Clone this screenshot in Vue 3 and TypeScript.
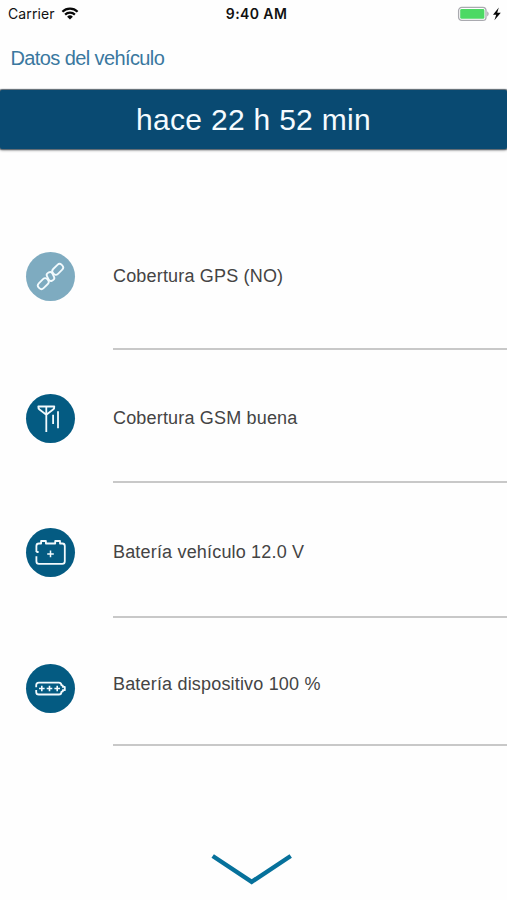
<script setup lang="ts">
interface Reading {
  id: 'gps' | 'gsm' | 'vehicle' | 'device'
  label: string
}

const elapsed = 'hace 22 h 52 min'

const readings: Reading[] = [
  { id: 'gps', label: 'Cobertura GPS (NO)' },
  { id: 'gsm', label: 'Cobertura GSM buena' },
  { id: 'vehicle', label: 'Batería vehículo 12.0 V' },
  { id: 'device', label: 'Batería dispositivo 100 %' },
]
</script>

<template>
  <main class="screen">
    <header class="status">
      <div class="carrier">
        <span>Carrier</span>
        <svg class="wifi" viewBox="0 0 18 13" width="18" height="13">
          <path d="M1.4 4.7a10.8 10.8 0 0 1 15.2 0M4.1 7.6a7 7 0 0 1 9.8 0" fill="none" stroke="#080808" stroke-width="2.2" />
          <path d="M9 12.6 6.1 9.7a4.2 4.2 0 0 1 5.8 0z" fill="#080808" />
        </svg>
      </div>
      <span class="clock">9:40 AM</span>
      <div class="power">
        <svg viewBox="0 0 46 16" width="46" height="16">
          <rect x="1.6" y="1.4" width="27.4" height="13" rx="3.2" fill="#fff" stroke="#aaaab0" stroke-width="1.3" />
          <rect x="3.2" y="3" width="24.2" height="9.8" rx="1.4" fill="#4cd964" />
          <path d="M30.2 5.3q3 2.6 0 5.2z" fill="#aaaab0" />
          <path d="M41.8 1.6 36 8.8h3.2l-1.8 5.4 6.4-7.4h-3.6z" fill="#080808" />
        </svg>
      </div>
    </header>

    <h1 class="title"><span>Datos del vehículo</span></h1>
    <div class="banner"><span>{{ elapsed }}</span></div>

    <ul class="readings">
      <li v-for="item in readings" :key="item.id" class="row" :class="item.id">
        <span class="badge">
          <svg viewBox="0.5 0.5 49 49" width="49" height="49" fill="none" stroke="#f2fafd" stroke-width="1.8" stroke-linejoin="round">
            <g v-if="item.id === 'gps'" transform="rotate(-45 25 25)">
              <rect x="8.8" y="21.6" width="12" height="6.8" rx="3" />
              <rect x="29.2" y="21.6" width="12" height="6.8" rx="3" />
              <rect x="22" y="20.6" width="6" height="8.8" rx="2.6" transform="rotate(18 25 25)" />
              <path d="M20.8 25H22M28 25h1.2" />
            </g>
            <g v-else-if="item.id === 'gsm'">
              <path d="M20.8 38.6V13M12.8 13h16q.2 1.8-1.2 3l-6.8 5.2-6.8-5.2q-1.4-1.2-1.2-3z" />
              <path d="M27.6 21.3v9.2M32.5 17.8v17" />
            </g>
            <g v-else-if="item.id === 'vehicle'">
              <path d="M10.9 24.5v-6q0-2.5 2.5-2.5h2.2v-2.5h4.8V16h9.3v-2.5h4.8V16h2.3q2.5 0 2.5 2.5v15.3q0 2.6-2.5 2.6H13.4q-2.5 0-2.5-2.6v-5M10.9 24.5h2.2" />
              <path d="M25 23.1v6.6M21.7 26.4h6.6" stroke-width="1.5" />
            </g>
            <g v-else>
              <path d="M10.7 23.8v-2.1q0-2.6 2.6-2.6h20q2.6 0 2.6 2.6l1.4.5v1.2h2v3.3h-2v1.2l-1.4.5q0 2.6-2.6 2.6h-20q-2.6 0-2.6-2.6v-2" />
              <path d="M16.3 22.2v5.6M13.5 25h5.6M24 22.2v5.6M21.2 25h5.6M31.7 22.2v5.6M28.9 25h5.6" stroke-width="1.6" />
            </g>
          </svg>
        </span>
        <span class="label"><span>{{ item.label }}</span></span>
      </li>
    </ul>

    <footer class="more">
      <svg viewBox="0 0 82 34" width="82" height="34">
        <path d="M1.7 3 40.7 28.8 79.7 3" fill="none" stroke="#06719b" stroke-width="4.4" />
      </svg>
    </footer>
  </main>
</template>

<style>
body {
  margin: 0;
  background: #fefefe;
}
</style>

<style scoped>
.screen {
  box-sizing: border-box;
  display: flex;
  flex-direction: column;
  width: 100%;
  height: 900px;
  overflow: hidden;
  background: #fefefe;
  font-family: "Liberation Sans", Arial, sans-serif;
}

.status {
  display: grid;
  grid-template-columns: 1fr auto 1fr;
  align-items: center;
  height: 27px;
  padding: 0 4px 0 8px;
  font-family: Inter, sans-serif;
  font-size: 14px;
  line-height: 27px;
  color: #111;
}

.carrier {
  display: flex;
  align-items: center;
  gap: 6px;
  letter-spacing: 0.1px;
}

.clock {
  padding-left: 2px;
  font-weight: 600;
  letter-spacing: 0.4px;
}

.power {
  display: flex;
  justify-content: flex-end;
}

.title {
  height: 63px;
  margin: 0;
  padding-left: 10.5px;
  box-sizing: border-box;
  font-size: 20px;
  font-weight: 300;
  line-height: 63px;
  letter-spacing: -0.6px;
  color: #3a789f;
}

.banner {
  flex: none;
  height: 59px;
  background: #094a72;
  border-radius: 2px;
  box-shadow: 0 0 1px 1px #5d6870, 0 1px 3px #777;
  color: #f5fbff;
  font-size: 30px;
  line-height: 60px;
  letter-spacing: 0.3px;
  text-align: center;
}

.readings {
  list-style: none;
  margin: 0;
  padding: 53px 0 0;
}

.row {
  display: grid;
  grid-template-columns: 86.6px 1fr;
  padding-left: 26.4px;
}

.badge {
  display: block;
  width: 49px;
  height: 49px;
  border-radius: 50%;
  background: #045b82;
  margin-top: 44px;
}

.badge svg {
  display: block;
}

.label {
  box-sizing: border-box;
  border-bottom: 2px solid #c8c8c8;
  padding-top: 57px;
  font-size: 18px;
  line-height: 22px;
  letter-spacing: 0.18px;
  color: #444;
}

.gps { height: 148px; }
.gsm { height: 133px; }
.vehicle { height: 135px; }
.device { height: 128px; }

.gps .badge {
  margin-top: 49.5px;
  background: #7eabc0;
}

.gps .label { padding-top: 63px; }
.vehicle .badge { margin-top: 45px; }
.vehicle .label { padding-top: 58px; }
.device .badge { margin-top: 46px; }
.device .label { padding-top: 55px; }

.more {
  display: flex;
  justify-content: center;
  padding: 107px 4px 0 0;
}
</style>
